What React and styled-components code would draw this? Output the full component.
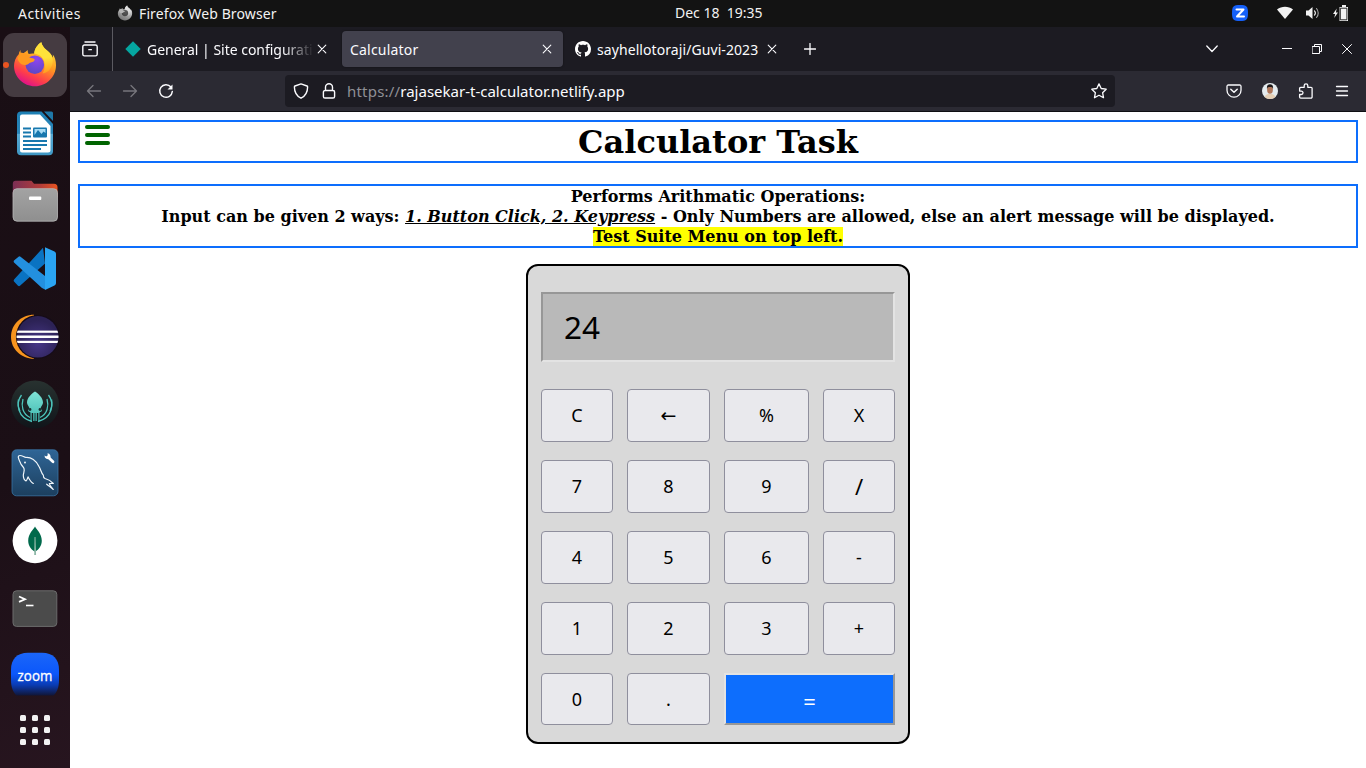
import React from "react";
import styled, { createGlobalStyle } from "styled-components";

const UI = `"Noto Sans", "Open Sans", sans-serif`;

const GlobalStyle = createGlobalStyle`
  * { box-sizing: border-box; }
  body { margin: 0; overflow: hidden; background: #fff; }
  svg { display: block; flex: none; }
`;

const Desktop = styled.div`
  width: 1366px;
  height: 768px;
  display: flex;
  flex-direction: column;
  font-family: ${UI};
  font-size: 14px;
  color: #fbfbfe;
`;

/* ---------- system bar ---------- */

const SystemBar = styled.header`
  height: 27px;
  flex: none;
  display: grid;
  grid-template-columns: 675px 90px 1fr;
  align-items: center;
  padding-bottom: 1px;
  background: #131313;
  color: #f2f2f2;
`;

const BarLeft = styled.div`
  display: flex;
  align-items: center;
  padding-left: 18px;

  > span { padding-top: 2px; }
`;

const BarRight = styled.div`
  display: flex;
  align-items: center;
  justify-content: flex-end;
  padding-right: 17px;
`;

const Label = styled.span`
  white-space: pre;
  flex: none;
  line-height: 20px;
  width: ${(p) => (p.$w ? p.$w + "px" : "auto")};
  font-size: ${(p) => p.$size || 14}px;
  letter-spacing: ${(p) => p.$ls || 0}px;
  color: ${(p) => p.$color || "inherit"};
`;

const Spacer = styled.div`
  flex: none;
  width: ${(p) => p.$w}px;
`;

/* ---------- dock ---------- */

const Workspace = styled.div`
  flex: 1;
  display: flex;
  min-height: 0;
`;

const Dock = styled.nav`
  width: 70px;
  flex: none;
  padding: 6px 3px 0;
  display: flex;
  flex-direction: column;
  align-items: center;
  gap: 3.8px;
  background: linear-gradient(160deg, #190e14 0%, #1b0f16 60%, #27151f 100%);
`;

const DockTile = styled.div`
  position: relative;
  width: 64px;
  height: 64px;
  flex: none;
  border-radius: 11px;
  background: ${(p) => (p.$active ? "#453b41" : "transparent")};
`;

const RunningDot = styled.i`
  position: absolute;
  left: 0;
  top: 29px;
  width: 6px;
  height: 6px;
  border-radius: 50%;
  background: #e95420;
`;

const AppGrid = styled.div`
  display: grid;
  grid-template-columns: repeat(3, 6px);
  grid-auto-rows: 6px;
  gap: 6px;
  margin-top: 4px;

  i { background: #f2f2f2; border-radius: 1.5px; }
`;

/* ---------- browser ---------- */

const Browser = styled.main`
  flex: 1;
  display: flex;
  flex-direction: column;
  min-width: 0;
`;

const TabStrip = styled.div`
  height: 44px;
  flex: none;
  display: flex;
  align-items: center;
  background: #1c1b22;
`;

const ViewButton = styled.div`
  width: 43px;
  height: 44px;
  display: flex;
  align-items: center;
  padding-left: 12px;
  border-right: 1px solid #5b5a61;
`;

const Tab = styled.div`
  width: ${(p) => p.$w}px;
  height: 36px;
  flex: none;
  display: flex;
  align-items: center;
  padding: 0 11px 0 8px;
  border-radius: 4px;
  margin-left: ${(p) => p.$ml || 0}px;
  background: ${(p) => (p.$active ? "#42414d" : "transparent")};
  box-shadow: ${(p) => (p.$active ? "0 0 2px rgba(0,0,0,.5)" : "none")};
`;

const TabTitle = styled.span`
  flex: 1;
  min-width: 0;
  padding-top: 1px;
  white-space: nowrap;
  line-height: 20px;
  margin-left: ${(p) => p.$ml || 0}px;
  letter-spacing: ${(p) => p.$ls || 0}px;
  mask-image: ${(p) => (p.$fade ? "linear-gradient(to right, #000 calc(100% - 32px), transparent)" : "none")};
`;

const Toolbar = styled.div`
  height: 41px;
  flex: none;
  display: flex;
  align-items: center;
  background: #2b2a33;
  border-bottom: 1px solid #0f0f13;
  padding: 0 16px;
`;

const UrlBar = styled.div`
  width: 830px;
  height: 32px;
  flex: none;
  display: flex;
  align-items: center;
  padding: 0 8px;
  border-radius: 4px;
  background: #1c1b22;
`;

const UrlEnd = styled.div`
  margin-left: auto;
`;

/* ---------- web page ---------- */

const Page = styled.section`
  flex: 1;
  padding: 8px;
  background: #fff;
  color: #000;
  font-family: "DejaVu Serif", serif;
  font-weight: bold;
`;

const Title = styled.h1`
  position: relative;
  height: 43px;
  margin: 0 0 21px;
  border: 2px solid #0d6efd;
  font-size: 32px;
  line-height: 41px;
  text-align: center;
`;

const MenuButton = styled.div`
  position: absolute;
  left: 5px;
  top: 3px;
  display: grid;
  gap: 4px;

  i { width: 25px; height: 4px; border-radius: 2px; background: #006400; }
`;

const Notes = styled.div`
  height: 64px;
  padding-top: 1px;
  border: 2px solid #0d6efd;
  font-size: 16px;
  line-height: 20px;
  text-align: center;
  white-space: nowrap;

  mark { background: #ff0; color: #000; }
`;

const Calculator = styled.div`
  width: 384px;
  height: 480px;
  margin: 16px auto 0;
  padding: 26px 13px 0;
  border: 2px solid #000;
  border-radius: 12px;
  background: #d9d9d9;
  font-family: ${UI};
  font-weight: normal;
`;

const Display = styled.div`
  height: 70px;
  padding-left: 21px;
  border: 2px solid;
  border-color: #979797 #e3e3e3 #e3e3e3 #979797;
  background: #b9b9b9;
  font-size: 31.5px;
  line-height: 66px;
`;

const Keys = styled.div`
  display: grid;
  grid-template-columns: 72px 83px 85px 72px;
  grid-template-rows: repeat(4, 53px) 52px;
  gap: 18px 14px;
  margin-top: 27px;
`;

const Key = styled.button`
  margin: 0;
  padding: 0 0 1px;
  border: 1px solid #8f8f9d;
  border-radius: 4px;
  background: #e9e9ed;
  color: #000;
  font-family: ${(p) => (p.$arrow ? `"DejaVu Sans", sans-serif` : UI)};
  font-size: ${(p) => p.$size || 18}px;
  line-height: 1;
`;

const EqualsKey = styled(Key)`
  grid-column: span 2;
  border: 2px solid;
  border-color: #e3e3e3 #979797 #979797 #e3e3e3;
  border-radius: 0;
  background: #0d6efd;
  color: #fff;
  padding: 3px 0 0;
`;

/* ---------- icons ---------- */

const Icon = ({ s = 16, w, h, children, ...rest }) => (
  <svg width={w || s} height={h || s} viewBox={`0 0 ${w || s} ${h || s}`} fill="none" stroke="#fbfbfe" strokeWidth="1.3" strokeLinecap="round" strokeLinejoin="round" {...rest}>
    {children}
  </svg>
);

const CloseIcon = () => (
  <Icon s={10} strokeWidth="1.1"><path d="M1.2 1.2l7.6 7.6M8.8 1.2L1.2 8.8" /></Icon>
);

const FirefoxArt = ({ id, stops, globe }) => (
  <>
    <defs>
      <linearGradient id={id + "a"} x1="0.8" y1="0.1" x2="0.35" y2="1">
        <stop offset="0" stopColor={stops[0]} />
        <stop offset="0.4" stopColor={stops[1]} />
        <stop offset="0.75" stopColor={stops[2]} />
        <stop offset="1" stopColor={stops[3]} />
      </linearGradient>
      <linearGradient id={id + "c"} x1="0.5" y1="0" x2="0.6" y2="1">
        <stop offset="0" stopColor={stops[0]} />
        <stop offset="0.5" stopColor={stops[0]} />
        <stop offset="1" stopColor={stops[1]} />
      </linearGradient>
      <radialGradient id={id + "b"} cx="0.6" cy="0.2" r="0.9">
        <stop offset="0" stopColor={globe[0]} />
        <stop offset="1" stopColor={globe[1]} />
      </radialGradient>
    </defs>
    <path fill={`url(#${id}a)`} d="M17.700 17c-.4 2 0 3.400.8 4.400 1.800-1 2.900-1.800 6.200-4.400-.1 1.600.3 3 1.100 4 1.700-.6 3.500-.7 5.400-.5C31.500 16.500 34 12 38.300 9.300 39 12.500 40.500 14.500 43.500 17c2.500 2.200 5 4 6.300 7.800.2-.8.2-1.800 0-3.300C51.800 24 53 27.500 53 32.300c0 11.500-9.500 21-21 21s-21-9.500-21-20.300c0-4 1.500-8.500 4.900-12 0-1.500.6-2.800 1.800-4z" />
    <path fill={`url(#${id}c)`} d="M38.300 9.300C34 12 31.500 16.500 31.200 20.500c6 .8 9.800 4.500 10.300 10 .5 3.500 0 7-2 10 6.500-1 10.500-6.500 10.300-13.500-.2-4.500-3.300-7.500-6.300-10-3-2.500-4.500-4.500-5.200-7.700z" />
    <circle cx="31.800" cy="31.700" r="9.300" fill={`url(#${id}b)`} />
    <path fill={stops[1]} d="M17.500 19.500c3.500.3 7.500 1.500 9 5 2 .5 4.800 1 5.300 2-.8 3-3.800 2.500-5.300 3.500s-2 2-3.200 1.700c-3.300 1.300-8.300-1.700-8.800-6.700z" />
  </>
);

const FirefoxIcon = () => (
  <svg width="64" height="64">
    <FirefoxArt id="fx" stops={["#ffe23a", "#ff9a20", "#ff4048", "#e0118a"]} globe={["#8f45f0", "#5548c0"]} />
  </svg>
);

const FirefoxMono = () => (
  <svg width="16" height="16" viewBox="9 8 46 47">
    <FirefoxArt id="fm" stops={["#e0e0e0", "#b5b5b5", "#8d8d8d", "#777777"]} globe={["#5a5a5a", "#444444"]} />
  </svg>
);

const WriterIcon = () => (
  <svg width="64" height="64">
    <defs>
      <linearGradient id="wr" x1="0" y1="0" x2="0" y2="1">
        <stop offset="0" stopColor="#1d7fb4" /><stop offset="0.5" stopColor="#2a85b8" /><stop offset="0.52" stopColor="#57a9d2" /><stop offset="1" stopColor="#3f97c4" />
      </linearGradient>
    </defs>
    <path d="M18 10.500H38.500L50 23V50.200a4 4 0 0 1-4 4H18a4 4 0 0 1-4-4V14.500a4 4 0 0 1 4-4z" fill="url(#wr)" />
    <path d="M19 13.500H37L47.500 25V49a2.500 2.500 0 0 1-2.500 2.500H19a2 2 0 0 1-2-2v-34a2 2 0 0 1 2-2z" fill="#fff" />
    <path d="M41 10.500h7.500a1.500 1.500 0 0 1 1.500 1.500V20z" fill="#1f78a8" />
    <g fill="#1878ae">
      <path d="M20 26.500h8v2h-8zM20 30.500h8v2h-8zM20 34.500h8v2h-8zM20 39h24v2H20zM20 43h24v2H20zM20 47h18v2H20z" />
      <rect x="30" y="26.500" width="14" height="10" rx="1" />
    </g>
    <path d="M31.500 28h11v4l-2-1.500-2 2.500-3.500-4-3.500 5z" fill="#a8dcf5" />
  </svg>
);

const FilesIcon = () => (
  <svg width="64" height="64">
    <defs>
      <linearGradient id="fl" x1="0" y1="0" x2="1" y2="0">
        <stop offset="0" stopColor="#7b2f55" /><stop offset="0.6" stopColor="#b13c3a" /><stop offset="1" stopColor="#e95420" />
      </linearGradient>
      <linearGradient id="fg" x1="0" y1="0" x2="0" y2="1">
        <stop offset="0" stopColor="#a3a3a3" /><stop offset="1" stopColor="#8f8f8f" />
      </linearGradient>
    </defs>
    <g transform="translate(0 -.8)">
      <path d="M13 12.500h15.500l2.500 3h20a3.500 3.500 0 0 1 3.500 3.500v10H9.800V15.500a3 3 0 0 1 3.200-3z" fill="url(#fl)" />
      <rect x="10" y="20.500" width="44.500" height="32.500" rx="4" fill="url(#fg)" stroke="#b9b9b9" strokeWidth=".8" />
      <rect x="26" y="28.300" width="12.300" height="3.400" rx="1" fill="#fff" />
    </g>
  </svg>
);

const CodeIcon = () => (
  <svg width="64" height="64">
    <path d="M11 45.500c-.5-.8-.4-1.500.3-2.300L40 11.800 42 27.500 17 49.800a1.500 1.500 0 0 1-2 0z" fill="#0a73c2" />
    <path d="M11 24.500l4.500-3.700a1.500 1.500 0 0 1 2 0L42 40V53.500L39 52 11.300 26.800c-.8-.8-.8-1.600-.3-2.300z" fill="#2390df" />
    <path d="M42 11.300l9.500 4.300A2.500 2.500 0 0 1 53 18v29a2.500 2.500 0 0 1-1.500 2.400L42 53.900z" fill="#2aa4f2" />
  </svg>
);

const EclipseIcon = () => (
  <svg width="64" height="64">
    <defs>
      <radialGradient id="ec" cx=".5" cy=".65" r=".55">
        <stop offset="0" stopColor="#473788" /><stop offset="1" stopColor="#2c2255" />
      </radialGradient>
      <clipPath id="ecc"><circle cx="34.500" cy="32.800" r="21" /></clipPath>
    </defs>
    <path d="M31 10.800C18 10.800 8 20.500 8 32.800s10 22 23 22z" fill="#f7941e" />
    <circle cx="34.800" cy="32.800" r="21.900" fill="#150b18" />
    <circle cx="34.800" cy="32.800" r="20.700" fill="url(#ec)" />
    <g clipPath="url(#ecc)" fill="#fff">
      <rect x="13" y="26.600" width="44" height="2.200" /><rect x="13" y="31.500" width="44" height="2.500" /><rect x="13" y="36.800" width="44" height="2.200" />
    </g>
  </svg>
);

const KrakenIcon = () => (
  <svg width="64" height="64">
    <defs>
      <linearGradient id="kr" x1="0" y1="0" x2="0" y2="1">
        <stop offset="0" stopColor="#7fe3d6" /><stop offset="1" stopColor="#3fb8b0" />
      </linearGradient>
      <linearGradient id="kb" x1="0" y1="0" x2="0" y2="1">
        <stop offset="0" stopColor="#283230" /><stop offset="1" stopColor="#10151a" />
      </linearGradient>
    </defs>
    <circle cx="32" cy="32.500" r="24" fill="url(#kb)" />
    <path d="M32 19.500c3 2 8 6 8 11 0 2.200-1.700 3.500-2.300 5.200l1.300 3.300-2.500 1.500V49h-1.200v-8h-1.500v8h-3.600v-8h-1.500v8h-1.200v-8.500L25 39l1.300-3.300c-.6-1.700-2.300-3-2.300-5.200 0-5 5-9 8-11z" fill="url(#kr)" />
    <g fill="none" stroke="#4cc4bb" strokeWidth="1.300">
      <path d="M18.500 23C12 32 15 46 29 49.500M45.500 23C52 32 49 46 35 49.500" />
      <path d="M15.500 27.500c-1 5 .2 9 1.500 11.500M48.500 27.500c1 5-.2 9-1.500 11.500" />
      <path d="M20 27c-2 7-.5 15 7 18.500M44 27c2 7 .5 15-7 18.500" />
    </g>
    <path d="M32 41v9" stroke="#16302f" strokeWidth="1" />
    <circle cx="27" cy="37.500" r="1.400" fill="#16302f" /><circle cx="37" cy="37.500" r="1.400" fill="#16302f" />
  </svg>
);

const MysqlIcon = () => (
  <svg width="64" height="64">
    <defs>
      <linearGradient id="my" x1="0" y1="0" x2="0" y2="1">
        <stop offset="0" stopColor="#2f6596" /><stop offset="1" stopColor="#1c3f5e" />
      </linearGradient>
    </defs>
    <rect x="9" y="9.800" width="46" height="46" rx="4.500" fill="url(#my)" stroke="#3a75a5" strokeWidth=".8" />
    <path d="M30.300 43.500C28 42.500 26.500 39.500 25 36.900c-.6 1.500-1 3.500-2 4-2-1-2.700-3.500-2.700-5.700.2-2.500 1.500-4.500.7-6.700-.8-2-2.500-3-3.300-5-.8-2.200-2.200-4-2.400-6.200 0-1.200.7-1.800 1.700-1.800 2.300 0 3.500 1.300 6 2 2.500-.2 5 .5 7.300 2 3 2 4.700 4.700 6 7.400 1.700 3.300 2 6.300 4 8.300 0 1.500.7 2.800 1.700 3.300 3 .8 6 2.500 8.300 5h-4c.5 2.500 2.500 4 4 6-2-1.800-4.500-3.500-6.600-5.300" fill="none" stroke="#f0f6fa" strokeWidth="1.200" strokeLinejoin="round" strokeLinecap="round" />
    <circle cx="22" cy="22.500" r=".9" fill="#fff" />
    <path d="M45 17l5 4.800" stroke="#fff" strokeWidth="2.800" strokeLinecap="round" />
    <path d="M41.500 15.500a3.500 3.500 0 0 0 5.500 3 3.400 3.400 0 0 0-2.500-5.300l.3 2.300-1.500 1z" fill="#fff" />
  </svg>
);

const MongoIcon = () => (
  <svg width="64" height="64">
    <circle cx="32" cy="32.800" r="22.400" fill="#fff" />
    <path d="M32 18.500c1.500 3.200 6.800 7 6.800 14.300 0 5-3 8.700-6.200 10.700h-1.200c-3.200-2-6.200-5.700-6.200-10.700 0-7.300 5.300-11.100 6.800-14.300z" fill="#00694b" />
    <path d="M31.500 29h1l.6 18h-1.900z" fill="#8fb8a8" />
  </svg>
);

const TerminalIcon = () => (
  <svg width="64" height="64">
    <rect x="10" y="15.800" width="43.800" height="35.600" rx="3.500" fill="#4b4b4b" stroke="#6c6c6c" strokeWidth="1" />
    <path d="M16 21.500l6 2.700-6 2.700" fill="none" stroke="#fff" strokeWidth="1.800" />
    <path d="M23 30.500h7.500" stroke="#fff" strokeWidth="1.600" />
  </svg>
);

const ZoomIcon = () => (
  <svg width="64" height="64">
    <defs>
      <linearGradient id="zm" x1="0" y1="0" x2="0" y2="1">
        <stop offset="0" stopColor="#1b66f8" /><stop offset=".5" stopColor="#0b57fb" /><stop offset=".75" stopColor="#0a3cb4" /><stop offset="1" stopColor="#101638" />
      </linearGradient>
    </defs>
    <path d="M25 9.800h14C50 9.800 56 16 56 27v10c0 7-2 12.500-5.500 15.500h-37C10 49.500 8 44 8 37V27C8 16 14 9.800 25 9.800z" fill="url(#zm)" />
    <text transform="translate(14.600 37.800) scale(1.12 1)" textLength="31" lengthAdjust="spacingAndGlyphs" fill="#fff" stroke="#fff" strokeWidth=".3" fontFamily="Open Sans, sans-serif" fontWeight="400" fontSize="14">zoom</text>
  </svg>
);

const DOCK = [FirefoxIcon, WriterIcon, FilesIcon, CodeIcon, EclipseIcon, KrakenIcon, MysqlIcon, MongoIcon, TerminalIcon, ZoomIcon];

const GITHUB = "M8 0C3.580 0 0 3.580 0 8c0 3.540 2.290 6.530 5.470 7.590.4.070.55-.17.55-.38 0-.19-.01-.82-.01-1.490-2.010.37-2.530-.49-2.690-.94-.09-.23-.48-.94-.82-1.130-.28-.15-.68-.52-.01-.53.63-.01 1.080.58 1.230.82.72 1.210 1.870.87 2.330.66.07-.52.28-.87.51-1.070-1.780-.2-3.640-.89-3.640-3.950 0-.87.31-1.590.82-2.150-.08-.2-.36-1.020.08-2.120 0 0 .67-.21 2.200.82.64-.18 1.320-.27 2-.27s1.360.09 2 .27c1.530-1.040 2.200-.82 2.200-.82.44 1.100.16 1.920.08 2.120.51.56.82 1.270.82 2.150 0 3.070-1.870 3.750-3.650 3.950.29.25.54.73.54 1.480 0 1.070-.01 1.930-.01 2.200 0 .21.15.46.55.38A8.010 8.010 0 0 0 16 8c0-4.420-3.580-8-8-8z";

const KEYS = [
  ["C"], ["←", 19, true], ["%"], ["X"],
  ["7"], ["8"], ["9"], ["/", 22],
  ["4"], ["5"], ["6"], ["-"],
  ["1"], ["2"], ["3"], ["+"],
  ["0"], ["."],
];

function TopBar() {
  return (
    <SystemBar>
      <BarLeft>
        <Label $w={99} $ls={0.45}>Activities</Label>
        <FirefoxMono />
        <Spacer $w={6} />
        <Label $ls={0.12}>Firefox Web Browser</Label>
      </BarLeft>
      <Label>{"Dec 18  19:35"}</Label>
      <BarRight>
        <Icon stroke="none">
          <path d="M8 0c6.500 0 8 1.500 8 8s-1.500 8-8 8-8-1.500-8-8 1.500-8 8-8z" fill="#1560f8" />
          <path d="M4.500 4.500h7L5 11.500h7" stroke="#fff" strokeWidth="2" />
        </Icon>
        <Spacer $w={29} />
        <Icon stroke="none"><path d="M0 4.600C4.500.9 11.500.9 16 4.600L8 14z" fill="#f2f2f2" /></Icon>
        <Spacer $w={12} />
        <Icon stroke="#f2f2f2" strokeWidth="1.100">
          <path d="M1 5.500h2.500L7.500 2v12L3.500 10.500H1z" fill="#f2f2f2" stroke="none" />
          <path d="M9.500 5.800c1 1.200 1 3.200 0 4.400" /><path d="M11.500 3.500c2.300 2.500 2.300 6.500 0 9" stroke="#a9a9a9" />
        </Icon>
        <Spacer $w={12} />
        <Icon stroke="none">
          <path d="M3.700 3.500L0 9h2.200L1.200 13 5 7.500H2.900z" fill="#f2f2f2" />
          <path d="M9 0h4v2h2v14H6.500V2H9z" fill="#f2f2f2" /><path d="M7.700 3.200h6.200v11.600H7.700z" stroke="#131313" strokeWidth=".9" />
        </Icon>
      </BarRight>
    </SystemBar>
  );
}

function Tabs() {
  return (
    <TabStrip>
      <ViewButton>
        <Icon><path d="M3 1h10M2.500 4h11a1.700 1.700 0 0 1 1.700 1.700V13.200a1.700 1.700 0 0 1-1.700 1.700H2.500a1.700 1.700 0 0 1-1.700-1.700V5.700A1.700 1.700 0 0 1 2.500 4z" strokeWidth="1.400" /><path d="M6.800 8.700h2.600" /></Icon>
      </ViewButton>
      <Tab $w={221} $ml={4}>
        <Icon stroke="none"><path d="M8 .3L15.700 8 8 15.700.3 8z" fill="#05a6a0" /></Icon>
        <TabTitle $ml={6} $ls={-0.02} $fade>General | Site configurati</TabTitle>
        <Spacer $w={3} />
        <CloseIcon />
      </Tab>
      <Tab $w={221} $ml={4} $active>
        <TabTitle $ls={0.2}>Calculator</TabTitle>
        <CloseIcon />
      </Tab>
      <Tab $w={221} $ml={4}>
        <Icon stroke="none"><path d={GITHUB} fill="#fff" /></Icon>
        <TabTitle $ml={6} $ls={0.08}>sayhellotoraji/Guvi-2023</TabTitle>
        <CloseIcon />
      </Tab>
      <Spacer $w={16} />
      <Icon s={12}><path d="M6 .5v11M.5 6h11" /></Icon>
      <Spacer $w={390} />
      <Icon w={12} h={8}><path d="M.8 1L6 6.500 11.200 1" /></Icon>
      <Spacer $w={64} />
      <Icon s={10} strokeLinecap="butt" strokeWidth="1"><path d="M0 4.500h10" /></Icon>
      <Spacer $w={20} />
      <Icon s={10} strokeWidth="1" strokeLinejoin="miter"><path d="M.5 2.500h7v7h-7zM2.500 2.500v-2h7v7h-2" /></Icon>
      <Spacer $w={20} />
      <Icon s={10} strokeWidth="1"><path d="M.5.5l9 9M9.500.5l-9 9" /></Icon>
    </TabStrip>
  );
}

function NavBar() {
  return (
    <Toolbar>
      <Icon stroke="#77767d"><path d="M1.500 8h13M7 2.500L1.500 8 7 13.500" /></Icon>
      <Spacer $w={20} />
      <Icon stroke="#77767d"><path d="M1.500 8h13M9 2.500L14.500 8 9 13.500" /></Icon>
      <Spacer $w={20} />
      <Icon><path d="M12.900 4A6.300 6.300 0 1 0 14.300 8.500" strokeWidth="1.500" /><path d="M14.500 1.500v5h-5z" fill="#fbfbfe" stroke="none" /></Icon>
      <Spacer $w={111} />
      <UrlBar>
        <Icon><path d="M8 .9l6 2.100a.9.9 0 0 1 .6.900c0 5-2.200 9-6.600 11.300C3.600 12.900 1.400 8.900 1.400 3.900A.9.9 0 0 1 2 3z" strokeWidth="1.400" /></Icon>
        <Spacer $w={12} />
        <Icon><path d="M4.500 7.500V4.200a3.500 3.500 0 0 1 7 0v3.300M4 7.500h8a1.600 1.600 0 0 1 1.600 1.600v4.300A1.600 1.600 0 0 1 12 15H4a1.600 1.600 0 0 1-1.600-1.600V9.100A1.600 1.600 0 0 1 4 7.500z" strokeWidth="1.400" /></Icon>
        <Spacer $w={10} />
        <Label $size={15} $ls={0.2} $color="#8f8f95">https://</Label>
        <Label $size={15}>rajasekar-t-calculator.netlify.app</Label>
        <UrlEnd>
          <Icon><path d="M8 .9l2.200 4.600 5 .7-3.600 3.500.9 5L8 12.300l-4.500 2.400.9-5L.8 6.200l5-.7z" /></Icon>
        </UrlEnd>
      </UrlBar>
      <Spacer $w={111} />
      <Icon><path d="M2.300 2h11.400A1.300 1.300 0 0 1 15 3.300v3.900a7 7 0 0 1-14 0V3.300A1.300 1.300 0 0 1 2.300 2z" /><path d="M4.800 6.200L8 9.200l3.200-3" strokeWidth="1.500" /></Icon>
      <Spacer $w={20} />
      <Icon stroke="none">
        <circle cx="8" cy="8" r="8" fill="#e4ebef" />
        <path d="M2.500 14c1-2.500 3-3 5.500-3s4.500.5 5.500 3A8 8 0 0 1 8 16a8 8 0 0 1-5.500-2z" fill="#e5cfb5" />
        <ellipse cx="8" cy="6.800" rx="2.900" ry="4" fill="#b0765a" />
        <path d="M5 6C4.500 2.500 6 1.300 8 1.300s3.500 1.200 3 4.700C10.500 4 9.500 4 8 4s-2.500 0-3 2z" fill="#1b1718" />
      </Icon>
      <Spacer $w={20} />
      <Icon><path d="M2.700 4.300H6.200V2.600a1.800 1.800 0 0 1 3.600 0V4.300H13a1.100 1.100 0 0 1 1.100 1.100V14a1.100 1.100 0 0 1-1.100 1.100H2.700A1.100 1.100 0 0 1 1.600 14V11.500H3.300a1.700 1.700 0 0 0 0-3.400H1.600V5.400a1.100 1.100 0 0 1 1.100-1.100z" /></Icon>
      <Spacer $w={20} />
      <Icon><path d="M2.500 3.500h11M2.500 8h11M2.500 12.500h11" /></Icon>
    </Toolbar>
  );
}

export default function App() {
  return (
    <Desktop>
      <GlobalStyle />
      <TopBar />
      <Workspace>
        <Dock>
          {DOCK.map((Art, i) => (
            <DockTile key={i} $active={i === 0}>
              {i === 0 && <RunningDot />}
              <Art />
            </DockTile>
          ))}
          <AppGrid>{Array.from({ length: 9 }, (_, i) => <i key={i} />)}</AppGrid>
        </Dock>
        <Browser>
          <Tabs />
          <NavBar />
          <Page>
            <Title>
              <MenuButton><i /><i /><i /></MenuButton>
              Calculator Task
            </Title>
            <Notes>
              Performs Arithmatic Operations:<br />
              Input can be given 2 ways: <u><em>1. Button Click, 2. Keypress</em></u> - Only Numbers are allowed, else an alert message will be displayed.<br />
              <mark>Test Suite Menu on top left.</mark>
            </Notes>
            <Calculator>
              <Display>24</Display>
              <Keys>
                {KEYS.map(([label, size, arrow]) => (
                  <Key key={label} $size={size} $arrow={arrow}>{label}</Key>
                ))}
                <EqualsKey $size={22}>=</EqualsKey>
              </Keys>
            </Calculator>
          </Page>
        </Browser>
      </Workspace>
    </Desktop>
  );
}
